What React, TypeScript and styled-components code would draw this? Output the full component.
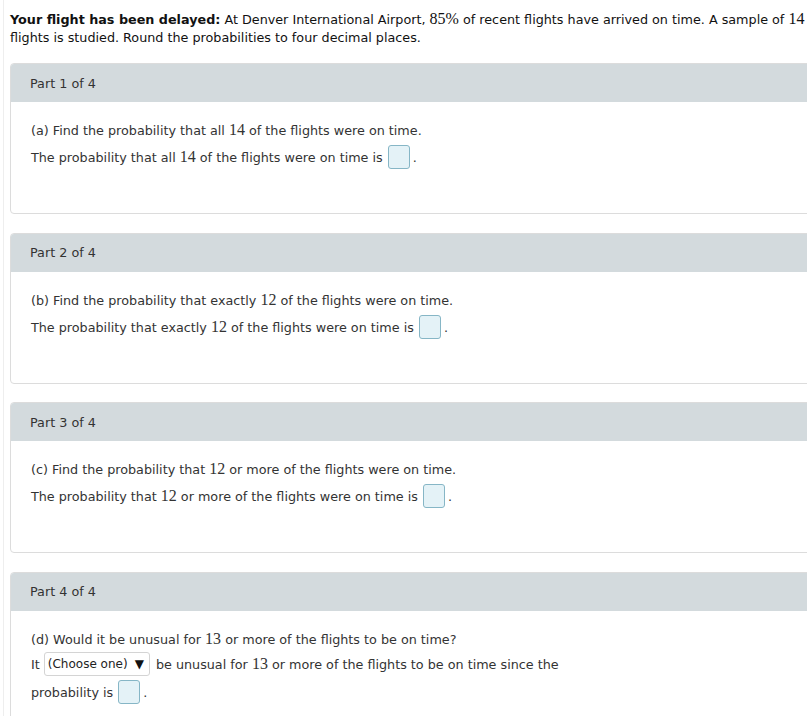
import React from 'react';
import styled, {createGlobalStyle} from 'styled-components';

const GlobalStyle = createGlobalStyle`
    html, body {
        margin: 0;
        padding: 0;
        background: #fff;
        overflow: hidden;
    }
    body {
        font-family: "DejaVu Sans", Verdana, sans-serif;
        font-size: 12.75px;
        color: #222;
    }
`;

const Page = styled.div`
    margin-left: 3px;
    padding: 11px 0 0 6px;
    border-left: 1px solid #eeeeee;
    min-height: 716px;
    box-sizing: border-box;
    width: 840px;
`;

const Intro = styled.p`
    margin: 0 0 16px;
    line-height: 18px;
    width: 800px;
    color: #111;
`;

const Lead = styled.strong`
    font-weight: bold;
`;

const Num = styled.span`
    font-family: "Liberation Serif", "Times New Roman", serif;
    font-size: 16px;
    line-height: 1;
`;

const Card = styled.section`
    border: 1px solid #dcdcdc;
    border-radius: 4px;
    margin-bottom: 18.6px;
    overflow: hidden;
    width: 820px;
`;

const CardHeader = styled.header`
    height: 38px;
    display: flex;
    align-items: center;
    padding-left: 19px;
    background: #d3dadd;
    color: #333;
`;

const CardBody = styled.div`
    padding: 20px 20px 41px 20px;
    color: #333;
`;

const Question = styled.p<{$gap: number}>`
    margin: 0 0 ${({$gap}) => $gap}px;
    line-height: 18px;
`;

const Answer = styled.p`
    margin: 0;
    line-height: 28px;
    max-width: 570px;
`;

const AnswerBox = styled.span`
    display: inline-block;
    vertical-align: middle;
    width: 20px;
    height: 22px;
    margin: -3px 3px 0 1px;
    border: 1px solid #86b6c6;
    border-radius: 3px;
    background: #e4f2f7;
`;

const Select = styled.span`
    display: inline-flex;
    align-items: center;
    vertical-align: middle;
    box-sizing: border-box;
    height: 24px;
    margin: -3px 2px 0 0;
    padding: 0 5px 0 3px;
    border: 1px solid #d4d4d4;
    border-radius: 3px;
    background: #fff;
    color: #222;
    font-size: 12px;
    line-height: 1;
`;

const Caret = styled.span`
    margin-left: 7px;
    font-size: 12px;
    color: #111;
`;

type PartProps = {
	index: number;
} & React.PropsWithChildren<Record<string, unknown>>;

function Part({index, children}: PartProps) {
	return (
		<Card>
			<CardHeader>Part {index} of 4</CardHeader>
			<CardBody>{children}</CardBody>
		</Card>
	);
}

export default function App() {
	return (
		<>
			<GlobalStyle />
			<Page>
				<Intro>
					<Lead>Your flight has been delayed:</Lead> At Denver International Airport, <Num>85%</Num> of recent
					flights have arrived on time. A sample of <Num>14</Num> flights is studied. Round the probabilities to
					four decimal places.
				</Intro>

				<Part index={1}>
					<Question $gap={4}>(a) Find the probability that all <Num>14</Num> of the flights were on time.</Question>
					<Answer>
						The probability that all <Num>14</Num> of the flights were on time is <AnswerBox />.
					</Answer>
				</Part>

				<Part index={2}>
					<Question $gap={4}>(b) Find the probability that exactly <Num>12</Num> of the flights were on time.</Question>
					<Answer>
						The probability that exactly <Num>12</Num> of the flights were on time is <AnswerBox />.
					</Answer>
				</Part>

				<Part index={3}>
					<Question $gap={4}>(c) Find the probability that <Num>12</Num> or more of the flights were on time.</Question>
					<Answer>
						The probability that <Num>12</Num> or more of the flights were on time is <AnswerBox />.
					</Answer>
				</Part>

				<Part index={4}>
					<Question $gap={2}>(d) Would it be unusual for <Num>13</Num> or more of the flights to be on time?</Question>
					<Answer>
						It <Select>(Choose one)<Caret>▼</Caret></Select> be unusual for <Num>13</Num> or more of the
						flights to be on time since the probability is <AnswerBox />.
					</Answer>
				</Part>
			</Page>
		</>
	);
}
